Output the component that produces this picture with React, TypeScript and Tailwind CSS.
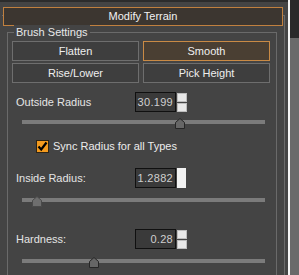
import React from "react";

const font = { fontFamily: '"Liberation Sans", Arial, sans-serif' };

function Thumb({ left, faded }: { left: number; faded?: boolean }) {
  return (
    <svg
      width="10"
      height="11"
      viewBox="0 0 10 11"
      className="absolute top-[-2px]"
      style={{ left }}
    >
      <polygon
        points="5,0.5 9.5,4.5 9.5,10.5 0.5,10.5 0.5,4.5"
        fill={faded ? "#6e6e6e" : "#666666"}
        stroke={faded ? "#4a4a4a" : "#262626"}
        strokeWidth="1"
      />
    </svg>
  );
}

function Slider({ thumb, faded }: { thumb: number; faded?: boolean }) {
  return (
    <div className="relative ml-[14px] h-[10px] w-[243px]">
      <div className="mt-[1px] h-[4px] w-full bg-[#7b7b7b]" />
      <Thumb left={thumb} faded={faded} />
    </div>
  );
}

function Spinner() {
  return (
    <div className="ml-[1px] flex h-[20px] w-[10px] flex-col gap-[1px] pt-[1px]">
      <div className="h-[9px] w-[10px] border border-[#bdbdbd] bg-[#e8e8e8]" />
      <div className="h-[9px] w-[10px] border border-[#bdbdbd] bg-[#e8e8e8]" />
    </div>
  );
}

function NumberRow({
  label,
  value,
  solid,
}: {
  label: string;
  value: string;
  solid?: boolean;
}) {
  return (
    <div className="ml-[8px] flex h-[20px] items-center">
      <div className="w-[119px] text-[11px] leading-none text-[#e4e4e4]">{label}</div>
      <div className="flex h-[20px] w-[41px] items-center justify-end border border-[#101010] bg-[#3a3a3a] pr-[2px] text-[11px] tracking-[0.3px] text-[#cfcfcf]">
        {value}
      </div>
      {solid ? (
        <div className="ml-[1px] h-[20px] w-[9px] bg-[#f2f2f2]" />
      ) : (
        <Spinner />
      )}
    </div>
  );
}

function Btn({ label, active }: { label: string; active?: boolean }) {
  return (
    <div
      className={
        active
          ? "flex h-[20px] items-center justify-center border border-[#c98a45] bg-[#4a3f33] text-[11px] text-[#f0f0f0]"
          : "flex h-[20px] items-center justify-center border border-[#6e6e6e] bg-[#3e3e3e] text-[11px] text-[#eeeeee]"
      }
    >
      {label}
    </div>
  );
}

export default function App() {
  return (
    <div className="flex h-[275px] w-[299px] overflow-hidden bg-[#444444]" style={font}>
      <div className="flex h-full w-[288px] flex-col">
        <div className="h-[2px] bg-[#2c2c2c]" />
        <div className="ml-[2px] mt-[13px] flex w-[283px] flex-1 flex-col border-r border-t border-[#6a6a6a] pl-[1px]">
          <div className="-mt-[9px] flex h-[19px] w-[280px] items-center justify-center border border-[#c0803f] bg-[#3c3630] text-[11px] text-[#f2f2f2]">
            Modify Terrain
          </div>

          <div className="ml-[4px] mt-[6px] flex w-[270px] flex-1 flex-col border-x border-t border-[#6a6a6a]">
            <div className="-mt-[8px] ml-[6px] h-[14px] w-fit bg-[#444444] px-[2px] text-[11px] leading-[14px] text-[#e8e8e8]">
              Brush Settings
            </div>

            <div className="ml-[4px] mt-[2px] grid w-[258px] grid-cols-2 gap-x-[4px] gap-y-[2px]">
              <Btn label="Flatten" />
              <Btn label="Smooth" active />
              <Btn label="Rise/Lower" />
              <Btn label="Pick Height" />
            </div>

            <div className="mt-[9px]">
              <NumberRow label="Outside Radius" value="30.199" />
            </div>

            <div className="mt-[7px]">
              <Slider thumb={153} />
            </div>

            <div className="ml-[28px] mt-[10px] flex h-[13px] items-center gap-[4px]">
              <div className="flex h-[13px] w-[13px] items-center justify-center border border-[#2d2416] bg-[#f39a1e]">
                <svg width="11" height="11" viewBox="0 0 11 11">
                  <path d="M1.5 5.5 L4.2 8.5 L9.5 1.5" fill="none" stroke="#000" strokeWidth="2.2" />
                </svg>
              </div>
              <span className="text-[11px] leading-none text-[#ececec]">Sync Radius for all Types</span>
            </div>

            <div className="mt-[15px]">
              <NumberRow label="Inside Radius:" value="1.2882" solid />
            </div>

            <div className="mt-[9px]">
              <Slider thumb={10} faded />
            </div>

            <div className="mt-[21px]">
              <NumberRow label="Hardness:" value="0.28" />
            </div>

            <div className="mt-[9px]">
              <Slider thumb={67} />
            </div>
          </div>
        </div>
      </div>
      <div className="h-full w-[2px] bg-[#f4f4f4]" />
      <div className="flex h-full flex-1 flex-col">
        <div className="h-[38px] bg-[#2a2a2a]" />
        <div className="flex-1 bg-[#6a6a6a]" />
      </div>
    </div>
  );
}
